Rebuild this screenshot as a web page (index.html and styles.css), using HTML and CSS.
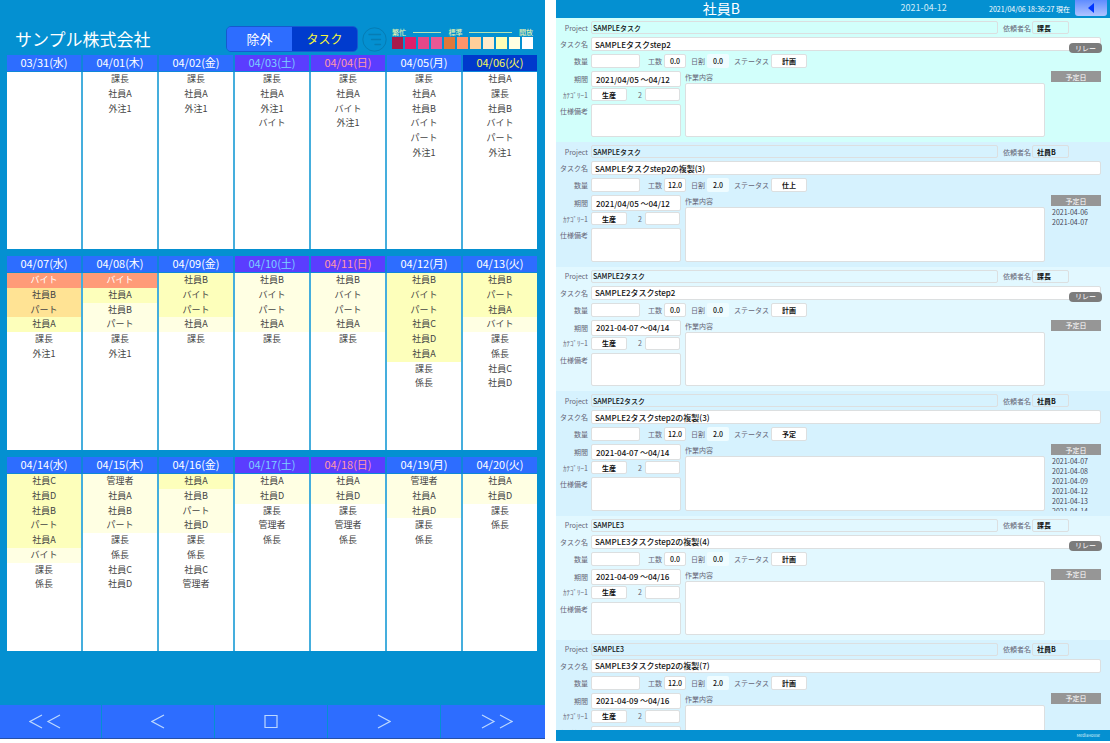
FILE: index.html
```html
<!DOCTYPE html>
<html lang="ja">
<head>
<meta charset="utf-8">
<meta name="viewport" content="width=device-width, initial-scale=1">
<title>サンプル株式会社</title>
<link rel="stylesheet" href="styles.css">
</head>
<body>
<main class="app">
<section class="calendar">
  <header class="toolbar">
    <h1 class="company">サンプル株式会社</h1>
    <div class="switch">
      <button class="switch-item" type="button">除外</button>
      <button class="switch-item is-on" type="button">タスク</button>
    </div>
    <button class="sort" type="button" aria-label="並べ替え">
      <svg viewBox="0 0 25 25" width="25" height="25" fill="none" stroke="currentColor"><circle cx="12.5" cy="12.5" r="11.7" stroke-width="1"/><path d="M7 7.5h11.5M9.5 12.5h9M13 17.5h5.5" stroke-width="1.3" stroke-linecap="round"/></svg>
    </button>
    <div class="legend">
      <div class="legend-names"><span>繁忙</span><i class="rule short"></i><span>標準</span><i class="rule"></i><span>開放</span></div>
      <div class="swatches"><i class="s1"></i><i class="s2"></i><i class="s3"></i><i class="s4"></i><i class="s5"></i><i class="s6"></i><i class="s7"></i><i class="s8"></i><i class="s9"></i><i class="s10"></i><i class="s11"></i></div>
    </div>
  </header>

  <div class="weeks">
    <div class="week">
      <section class="day"><h2>03/31(水)</h2><ul></ul></section>
      <section class="day"><h2>04/01(木)</h2><ul><li>課長</li><li>社員A</li><li>外注1</li></ul></section>
      <section class="day"><h2>04/02(金)</h2><ul><li>課長</li><li>社員A</li><li>外注1</li></ul></section>
      <section class="day sat"><h2>04/03(土)</h2><ul><li>課長</li><li>社員A</li><li>外注1</li><li>バイト</li></ul></section>
      <section class="day sun"><h2>04/04(日)</h2><ul><li>課長</li><li>社員A</li><li>バイト</li><li>外注1</li></ul></section>
      <section class="day"><h2>04/05(月)</h2><ul><li>課長</li><li>社員A</li><li>社員B</li><li>バイト</li><li>パート</li><li>外注1</li></ul></section>
      <section class="day today"><h2>04/06(火)</h2><ul><li>社員A</li><li>課長</li><li>社員B</li><li>バイト</li><li>パート</li><li>外注1</li></ul></section>
    </div>
    <div class="week">
      <section class="day"><h2>04/07(水)</h2><ul><li class="l4">バイト</li><li class="l3">社員B</li><li class="l3">パート</li><li class="l2">社員A</li><li>課長</li><li>外注1</li></ul></section>
      <section class="day"><h2>04/08(木)</h2><ul><li class="l4">バイト</li><li class="l2">社員A</li><li class="l1">社員B</li><li class="l1">パート</li><li>課長</li><li>外注1</li></ul></section>
      <section class="day"><h2>04/09(金)</h2><ul><li class="l2">社員B</li><li class="l2">バイト</li><li class="l2">パート</li><li class="l1">社員A</li><li>課長</li></ul></section>
      <section class="day sat"><h2>04/10(土)</h2><ul><li class="l1">社員B</li><li class="l1">バイト</li><li class="l1">パート</li><li class="l1">社員A</li><li>課長</li></ul></section>
      <section class="day sun"><h2>04/11(日)</h2><ul><li class="l1">社員B</li><li class="l1">バイト</li><li class="l1">パート</li><li class="l1">社員A</li><li>課長</li></ul></section>
      <section class="day"><h2>04/12(月)</h2><ul><li class="l2">社員B</li><li class="l2">バイト</li><li class="l2">パート</li><li class="l2">社員C</li><li class="l2">社員D</li><li class="l2">社員A</li><li>課長</li><li>係長</li></ul></section>
      <section class="day"><h2>04/13(火)</h2><ul><li class="l2">社員B</li><li class="l2">パート</li><li class="l2">社員A</li><li class="l1">バイト</li><li>課長</li><li>係長</li><li>社員C</li><li>社員D</li></ul></section>
    </div>
    <div class="week">
      <section class="day"><h2>04/14(水)</h2><ul><li class="l2">社員C</li><li class="l2">社員D</li><li class="l2">社員B</li><li class="l2">パート</li><li class="l2">社員A</li><li class="l1">バイト</li><li>課長</li><li>係長</li></ul></section>
      <section class="day"><h2>04/15(木)</h2><ul><li class="l1">管理者</li><li class="l1">社員A</li><li class="l1">社員B</li><li class="l1">パート</li><li>課長</li><li>係長</li><li>社員C</li><li>社員D</li></ul></section>
      <section class="day"><h2>04/16(金)</h2><ul><li class="l2">社員A</li><li class="l1">社員B</li><li class="l1">パート</li><li class="l1">社員D</li><li>課長</li><li>係長</li><li>社員C</li><li>管理者</li></ul></section>
      <section class="day sat"><h2>04/17(土)</h2><ul><li class="l1">社員A</li><li class="l1">社員D</li><li>課長</li><li>管理者</li><li>係長</li></ul></section>
      <section class="day sun"><h2>04/18(日)</h2><ul><li class="l1">社員A</li><li class="l1">社員D</li><li>課長</li><li>管理者</li><li>係長</li></ul></section>
      <section class="day"><h2>04/19(月)</h2><ul><li class="l1">管理者</li><li class="l1">社員A</li><li class="l1">社員D</li><li>課長</li><li>係長</li></ul></section>
      <section class="day"><h2>04/20(火)</h2><ul><li class="l1">社員A</li><li class="l1">社員D</li><li>課長</li><li>係長</li></ul></section>
    </div>
  </div>

  <nav class="pager">
    <button type="button" aria-label="前月"><svg viewBox="0 0 32 15" width="32" height="15"><path d="M13 1L1 7.5L13 14M31 1L19 7.5L31 14"/></svg></button>
    <button type="button" aria-label="前週"><svg viewBox="0 0 14 15" width="14" height="15"><path d="M13 1L1 7.5L13 14"/></svg></button>
    <button type="button" aria-label="今日"><svg viewBox="0 0 14 15" width="14" height="15"><path d="M1 1.5h12v12H1z"/></svg></button>
    <button type="button" aria-label="次週"><svg viewBox="0 0 14 15" width="14" height="15"><path d="M1 1L13 7.5L1 14"/></svg></button>
    <button type="button" aria-label="翌月"><svg viewBox="0 0 32 15" width="32" height="15"><path d="M1 1L13 7.5L1 14M19 1L31 7.5L19 14"/></svg></button>
  </nav>
</section>

<section class="detail">
  <header class="detail-head">
    <h2 class="member">社員B</h2>
    <span class="head-date">2021-04-12</span>
    <span class="stamp">2021/04/06 18:36:27 現在</span>
    <button class="back" type="button" aria-label="戻る"><svg viewBox="0 0 6 10" width="6" height="10"><path d="M6 0v10L0 5z" fill="#0036ff"/></svg></button>
  </header>

  <div class="cards">
    <article class="card first">
      <div class="row"><label class="field grow"><span class="name">Project</span><input class="flat" value="SAMPLEタスク"></label><label class="field client"><span>依頼者名</span><input class="flat" value="課長"></label></div>
      <label class="field"><span class="name">タスク名</span><input class="task" value="SAMPLEタスクstep2"></label>
      <div class="row numbers"><label class="field qty"><span class="name">数量</span><input></label><label class="field hours"><span>工数</span><input value="0.0"></label><label class="field daily"><span>日割</span><input value="0.0" readonly></label><label class="field status"><span>ステータス</span><input value="計画"></label></div>
      <div class="row body">
        <div class="left"><label class="field period"><span class="name">期間</span><input value="2021/04/05 ～04/12"></label><div class="row cats"><label class="field"><span class="name">ｶﾃｺﾞﾘｰ1</span><input value="生産"></label><label class="field"><span class="two">2</span><input></label></div><label class="field spec"><span class="name">仕様備考</span><textarea></textarea></label></div>
        <label class="work"><span>作業内容</span><textarea></textarea></label>
        <div class="plan"><button type="button">予定日</button></div>
      </div>
      <button class="relay" type="button">リレー</button>
    </article>

    <article class="card alt">
      <div class="row"><label class="field grow"><span class="name">Project</span><input class="flat" value="SAMPLEタスク"></label><label class="field client"><span>依頼者名</span><input class="flat" value="社員B"></label></div>
      <label class="field"><span class="name">タスク名</span><input class="task" value="SAMPLEタスクstep2の複製(3)"></label>
      <div class="row numbers"><label class="field qty"><span class="name">数量</span><input></label><label class="field hours"><span>工数</span><input value="12.0"></label><label class="field daily"><span>日割</span><input value="2.0" readonly></label><label class="field status"><span>ステータス</span><input value="仕上"></label></div>
      <div class="row body">
        <div class="left"><label class="field period"><span class="name">期間</span><input value="2021/04/05 ～04/12"></label><div class="row cats"><label class="field"><span class="name">ｶﾃｺﾞﾘｰ1</span><input value="生産"></label><label class="field"><span class="two">2</span><input></label></div><label class="field spec"><span class="name">仕様備考</span><textarea></textarea></label></div>
        <label class="work"><span>作業内容</span><textarea></textarea></label>
        <div class="plan"><button type="button">予定日</button><ul><li>2021-04-06</li><li>2021-04-07</li></ul></div>
      </div>
    </article>

    <article class="card">
      <div class="row"><label class="field grow"><span class="name">Project</span><input class="flat" value="SAMPLE2タスク"></label><label class="field client"><span>依頼者名</span><input class="flat" value="課長"></label></div>
      <label class="field"><span class="name">タスク名</span><input class="task" value="SAMPLE2タスクstep2"></label>
      <div class="row numbers"><label class="field qty"><span class="name">数量</span><input></label><label class="field hours"><span>工数</span><input value="0.0"></label><label class="field daily"><span>日割</span><input value="0.0" readonly></label><label class="field status"><span>ステータス</span><input value="計画"></label></div>
      <div class="row body">
        <div class="left"><label class="field period"><span class="name">期間</span><input value="2021-04-07 ～04/14"></label><div class="row cats"><label class="field"><span class="name">ｶﾃｺﾞﾘｰ1</span><input value="生産"></label><label class="field"><span class="two">2</span><input></label></div><label class="field spec"><span class="name">仕様備考</span><textarea></textarea></label></div>
        <label class="work"><span>作業内容</span><textarea></textarea></label>
        <div class="plan"><button type="button">予定日</button></div>
      </div>
      <button class="relay" type="button">リレー</button>
    </article>

    <article class="card alt">
      <div class="row"><label class="field grow"><span class="name">Project</span><input class="flat" value="SAMPLE2タスク"></label><label class="field client"><span>依頼者名</span><input class="flat" value="社員B"></label></div>
      <label class="field"><span class="name">タスク名</span><input class="task" value="SAMPLE2タスクstep2の複製(3)"></label>
      <div class="row numbers"><label class="field qty"><span class="name">数量</span><input></label><label class="field hours"><span>工数</span><input value="12.0"></label><label class="field daily"><span>日割</span><input value="2.0" readonly></label><label class="field status"><span>ステータス</span><input value="予定"></label></div>
      <div class="row body">
        <div class="left"><label class="field period"><span class="name">期間</span><input value="2021-04-07 ～04/14"></label><div class="row cats"><label class="field"><span class="name">ｶﾃｺﾞﾘｰ1</span><input value="生産"></label><label class="field"><span class="two">2</span><input></label></div><label class="field spec"><span class="name">仕様備考</span><textarea></textarea></label></div>
        <label class="work"><span>作業内容</span><textarea></textarea></label>
        <div class="plan"><button type="button">予定日</button><ul><li>2021-04-07</li><li>2021-04-08</li><li>2021-04-09</li><li>2021-04-12</li><li>2021-04-13</li><li>2021-04-14</li></ul></div>
      </div>
    </article>

    <article class="card">
      <div class="row"><label class="field grow"><span class="name">Project</span><input class="flat" value="SAMPLE3"></label><label class="field client"><span>依頼者名</span><input class="flat" value="課長"></label></div>
      <label class="field"><span class="name">タスク名</span><input class="task" value="SAMPLE3タスクstep2の複製(4)"></label>
      <div class="row numbers"><label class="field qty"><span class="name">数量</span><input></label><label class="field hours"><span>工数</span><input value="0.0"></label><label class="field daily"><span>日割</span><input value="0.0" readonly></label><label class="field status"><span>ステータス</span><input value="計画"></label></div>
      <div class="row body">
        <div class="left"><label class="field period"><span class="name">期間</span><input value="2021-04-09 ～04/16"></label><div class="row cats"><label class="field"><span class="name">ｶﾃｺﾞﾘｰ1</span><input value="生産"></label><label class="field"><span class="two">2</span><input></label></div><label class="field spec"><span class="name">仕様備考</span><textarea></textarea></label></div>
        <label class="work"><span>作業内容</span><textarea></textarea></label>
        <div class="plan"><button type="button">予定日</button></div>
      </div>
      <button class="relay" type="button">リレー</button>
    </article>

    <article class="card alt">
      <div class="row"><label class="field grow"><span class="name">Project</span><input class="flat" value="SAMPLE3"></label><label class="field client"><span>依頼者名</span><input class="flat" value="社員B"></label></div>
      <label class="field"><span class="name">タスク名</span><input class="task" value="SAMPLE3タスクstep2の複製(7)"></label>
      <div class="row numbers"><label class="field qty"><span class="name">数量</span><input></label><label class="field hours"><span>工数</span><input value="12.0"></label><label class="field daily"><span>日割</span><input value="2.0" readonly></label><label class="field status"><span>ステータス</span><input value="計画"></label></div>
      <div class="row body">
        <div class="left"><label class="field period"><span class="name">期間</span><input value="2021-04-09 ～04/16"></label><div class="row cats"><label class="field"><span class="name">ｶﾃｺﾞﾘｰ1</span><input value="生産"></label><label class="field"><span class="two">2</span><input></label></div><label class="field spec"><span class="name">仕様備考</span><textarea></textarea></label></div>
        <label class="work"><span>作業内容</span><textarea></textarea></label>
        <div class="plan"><button type="button">予定日</button></div>
      </div>
    </article>
  </div>
  <footer class="brand">MediaHouse</footer>
</section>
</main>
</body>
</html>
```

FILE: styles.css
```css
* { box-sizing: border-box; }

body {
  margin: 0;
  background: #fff;
  font-family: "Noto Sans CJK JP", sans-serif;
  font-size: 7px;
}

h1, h2, ul { margin: 0; padding: 0; font-weight: 400; list-style: none; }

button, input, textarea {
  margin: 0;
  padding: 0;
  border: 0;
  font: inherit;
  color: inherit;
}

button { cursor: pointer; }

.app {
  display: grid;
  grid-template-columns: 545fr 554fr;
  gap: 11px;
  height: 100vh;
}

/* Calendar */
.calendar {
  display: flex;
  flex-direction: column;
  margin-bottom: 4px;
  background: #0490d1;
}

.toolbar {
  display: flex;
  align-items: center;
  padding: 23px 12px 0 15px;
  height: 55px;
}

.company {
  flex: 1;
  color: #fff;
  font-size: 17px;
  line-height: 24px;
  white-space: nowrap;
}

.switch {
  display: flex;
  width: 132px;
  height: 26px;
  border: 1px solid #1659cf;
  border-radius: 5px;
  overflow: hidden;
}

.switch-item {
  flex: 1;
  background: #2d6dff;
  color: #fff;
  font-size: 13px;
  line-height: 22px;
}

.switch-item.is-on { background: #003bce; color: #f5f53c; font-size: 12px; }

.sort {
  display: flex;
  flex: none;
  margin: 0 5px 0 4px;
  background: none;
  color: #067cb4;
}

.legend { width: 141px; padding-bottom: 2px; }

.legend-names {
  display: flex;
  align-items: center;
  gap: 7px;
  height: 10px;
  color: #e2f2b0;
  font-weight: 500;
  line-height: 10px;
}

.rule { flex: 3; height: 1px; background: #b8e3b0; }
.rule.short { flex: 2; }

.swatches { display: flex; gap: 2px; height: 12px; }
.swatches i { flex: 1; }
.s1 { background: #a81b4b; }
.s2 { background: #df1e6b; }
.s3 { background: #e44888; }
.s4 { background: #e85894; }
.s5 { background: #e0783a; }
.s6 { background: #ff946a; }
.s7 { background: #ffcf9a; }
.s8 { background: #ffebcb; }
.s9 { background: #ffffb5; }
.s10 { background: #ffffe2; }
.s11 { background: #fff; }

.weeks {
  display: flex;
  flex: 1;
  flex-direction: column;
  gap: 7px;
  padding: 0 8px 0 7px;
}

.week {
  display: grid;
  grid-template-columns: repeat(7, 1fr);
  gap: 2px;
  background: linear-gradient(#0f86d8 17px, #45aedd 17px);
}

.day h2 {
  height: 17px;
  border-bottom: 1px solid #0f86d8;
  background: #2d6dff;
  color: #fff;
  font-size: 11px;
  line-height: 15px;
  text-align: center;
  white-space: nowrap;
}

.day.sat h2 { background: #5b3dff; color: #7cd0ff; }
.day.sun h2 { background: #5b3dff; color: #ff9aa8; }
.day.today h2 { background: #0039cc; color: #f6f65a; }

.day ul {
  display: grid;
  grid-template-rows: repeat(12, 1fr);
  height: 177px;
  background: #fff;
  color: #444;
  font-size: 9px;
  line-height: 14px;
  text-align: center;
}

.l1 { background: #ffffe3; }
.l2 { background: #fdffbb; }
.l3 { background: #ffe394; }
.l4 { background: #ff9b78; color: #fff; }

.pager {
  display: grid;
  grid-template-columns: 101fr 112fr 112fr 112fr 104fr;
  gap: 1px;
  height: 34px;
  border-bottom: 1px solid #2650a8;
}

.pager button {
  display: flex;
  align-items: center;
  justify-content: center;
  background: #2d6dff;
}

.pager button:first-child { padding-right: 11px; }
.pager button:last-child { padding-left: 8px; }
.pager svg { fill: none; stroke: #bcd8ff; stroke-width: 1.2; }

/* Task details */
.detail {
  display: flex;
  flex-direction: column;
  min-height: 0;
  margin-bottom: 2px;
}

.detail-head {
  display: grid;
  grid-template-columns: 60% 1fr auto auto;
  height: 18px;
  padding-right: 3px;
  background: #0490d1;
  color: #fff;
}

.member { font-size: 14px; line-height: 16px; text-align: center; }
.head-date { padding-left: 14px; font-size: 9px; line-height: 16px; color: #d0ecf8; }
.stamp { padding-right: 5px; line-height: 18px; }

.back {
  display: flex;
  align-items: center;
  justify-content: center;
  width: 32px;
  height: 16px;
  border-radius: 0 0 3px 3px;
  background: linear-gradient(#5f8cff, #b0c4ff);
}

.cards {
  display: grid;
  grid-auto-rows: 17.47%;
  flex: 1;
  min-height: 0;
  overflow-y: auto;
  scrollbar-width: none;
}

.card {
  position: relative;
  display: flex;
  flex-direction: column;
  gap: 3px;
  padding: 3px 9px 5px 0;
  background: #e2f8ff;
  color: #667;
  line-height: 10px;
}

.card.first { background: #d2fffb; }
.card.alt { background: #d6f2fe; }

.row { display: flex; }
.field { display: flex; align-items: center; gap: 3px; white-space: nowrap; }
.grow { flex: 1; }
.name { flex: none; width: 32px; text-align: right; }

.card input, .card textarea {
  width: 100%;
  min-width: 0;
  height: 14px;
  border: 1px solid #dcdfe0;
  border-radius: 2px;
  background: #fff;
  color: #111;
  font-weight: 500;
}

.card textarea { display: block; resize: none; }
.card input.flat { height: 13px; padding-left: 1px; background: transparent; }
.card input.task { padding-left: 3px; font-size: 8px; }

.client { gap: 1px; margin: 0 32px 0 5px; }
.card .client input { width: 37px; padding-left: 4px; font-weight: 700; }

.qty { width: 84px; margin-right: 8px; }
.hours, .daily { gap: 2px; }
.hours { margin-right: 5px; }
.daily { margin-right: 5px; }
.card .hours input, .card .daily input { width: 22px; text-align: center; }
.card .daily input { border-color: transparent; background: #effcff; }
.card .status { gap: 2px; }
.card .status input { width: 36px; text-align: center; font-weight: 700; }

.body { flex: 1; min-height: 0; }

.left {
  display: flex;
  flex-direction: column;
  gap: 1px;
  width: 125px;
  margin-right: 4px;
}

.card .period input { height: 16px; padding-left: 4px; font-size: 8px; }
.cats { gap: 11px; }
.cats input { text-align: center; }
.card .cats .field { width: 71px; }
.card .cats .field:last-child { width: 42px; }
.card .cats input { height: 13px; font-weight: 700; }
.spec { flex: 1; align-items: flex-start; padding-top: 2px; }
.spec .name { padding-top: 2px; }
.card .spec textarea { height: 100%; }

.work { display: flex; flex: 1; flex-direction: column; }
.work span { height: 12px; line-height: 12px; }
.card .work textarea { flex: 1; }

.plan {
  display: flex;
  flex-direction: column;
  width: 50px;
  margin-left: 6px;
}

.plan button {
  flex: none;
  height: 11px;
  background: #969696;
  color: #fff;
  line-height: 10px;
}

.plan ul { padding: 1px 0 0 1px; overflow: hidden; color: #445; }

.relay {
  position: absolute;
  top: 25px;
  right: 8px;
  width: 33px;
  height: 10px;
  border-radius: 4px;
  background: #7c7c7c;
  color: #fff;
  line-height: 9px;
}

.brand {
  height: 11px;
  padding-right: 10px;
  background: #0490d1;
  color: #d8f0fa;
  font-size: 4px;
  line-height: 10px;
  text-align: right;
}
```
